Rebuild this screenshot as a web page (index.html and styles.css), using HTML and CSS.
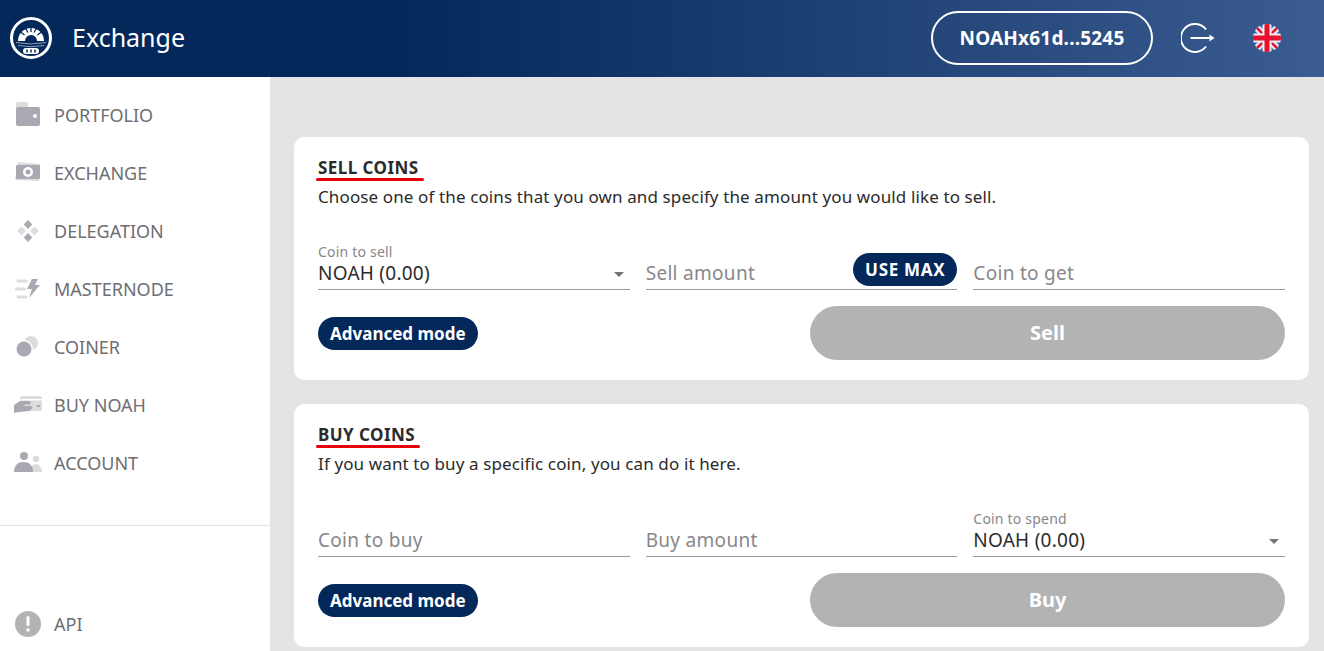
FILE: index.html
```html
<!DOCTYPE html>
<html lang="en">
<head>
    <meta charset="UTF-8">
    <title>Exchange</title>
    <link rel="stylesheet" href="styles.css">
</head>
<body>
    <header class="topbar">
        <svg class="logo" viewBox="0 0 44 44">
            <circle cx="22" cy="22" r="19.500" fill="none" stroke="#fff" stroke-width="3"/>
            <path d="M9 25a13 13 0 0 1 26 0z" fill="#fff"/>
            <path d="M22 10v6M16 11.500l3 5M28 11.500l-3 5M11.500 16l4 3M32.500 16l-4 3" stroke="#04285a" stroke-width="1.300"/>
            <path d="M16 25a6 6 0 0 1 12 0z" fill="#04285a"/>
            <path d="M7 26.500q15 3 30 0M9 29.500q13 2.500 26 0" fill="none" stroke="#8ea0b8" stroke-width="1"/>
            <rect x="14" y="32" width="16" height="6" rx="3" fill="#fff"/>
            <path d="M18 33.500v3M22 33.500v3M26 33.500v3" stroke="#04285a" stroke-width="1.500"/>
            <path d="M16 41h12" stroke="#fff" stroke-width="1.500" stroke-dasharray="2 1"/>
        </svg>
        <h1 class="page-title">Exchange</h1>
        <div class="topbar-right">
            <div class="wallet">NOAHx61d...5245</div>
            <svg class="logout" viewBox="0 0 34 30">
                <path d="M25 6.500 a14 14 0 1 0 0 17" fill="none" stroke="#fff" stroke-width="2"/>
                <path d="M9.500 15h20" stroke="#fff" stroke-width="2"/>
                <path d="M28.500 11.500l5 3.500-5 3.500z" fill="#fff"/>
            </svg>
            <svg class="flag" viewBox="0 0 28 28">
                <defs><clipPath id="flag-clip"><circle cx="14" cy="14" r="14"/></clipPath></defs>
                <g clip-path="url(#flag-clip)">
                    <rect width="28" height="28" fill="#2a5db0"/>
                    <path d="M0 0L28 28M28 0L0 28" stroke="#e6e6ee" stroke-width="7"/>
                    <path d="M0 0L28 28M28 0L0 28" stroke="#e8112d" stroke-width="2.500"/>
                    <path d="M14 0V28M0 14H28" stroke="#eeeef2" stroke-width="9"/>
                    <path d="M14 0V28M0 14H28" stroke="#e8112d" stroke-width="5"/>
                </g>
            </svg>
        </div>
    </header>

    <div class="layout">
        <aside class="sidebar">
            <nav class="menu">
                <a class="menu-item" href="#">
                    <svg class="menu-icon" viewBox="0 0 26 26">
                        <path d="M1 2a2 2 0 0 1 2-2h8a2 2 0 0 1 2 2v4H1z" fill="#dcdcdf"/>
                        <rect x="1" y="5" width="24" height="19" rx="2" fill="#a9a9b2"/>
                        <circle cx="20" cy="14" r="2" fill="#fff"/>
                    </svg>
                    PORTFOLIO
                </a>
                <a class="menu-item" href="#">
                    <svg class="menu-icon" viewBox="0 0 26 26">
                        <path d="M3 2L25 4l-1 17L0 20z" fill="#dcdcdf"/>
                        <rect x="1" y="5" width="24" height="14" rx="1" fill="#a9a9b2"/>
                        <circle cx="13" cy="12" r="5" fill="#fff"/>
                        <circle cx="13" cy="12" r="2.500" fill="#a9a9b2"/>
                    </svg>
                    EXCHANGE
                </a>
                <a class="menu-item" href="#">
                    <svg class="menu-icon" viewBox="0 0 26 26">
                        <path d="M13 2l4.300 4.500-4.300 4.500-4.300-4.500zM13 15l4.300 4.500-4.300 4.500-4.300-4.500z" fill="#a9a9b2"/>
                        <path d="M6.500 8.500l4.300 4.500-4.300 4.500L2.200 13zM19.500 8.500l4.300 4.500-4.300 4.500L15.200 13z" fill="#dcdcdf"/>
                    </svg>
                    DELEGATION
                </a>
                <a class="menu-item" href="#">
                    <svg class="menu-icon" viewBox="0 0 26 26">
                        <path d="M3 5h8M1.500 13h8M3 21h8" stroke="#dcdcdf" stroke-width="3" stroke-linecap="round"/>
                        <path d="M17 3h6l-3 6h5L14 22l3-9h-5z" fill="#a9a9b2"/>
                    </svg>
                    MASTERNODE
                </a>
                <a class="menu-item" href="#">
                    <svg class="menu-icon" viewBox="0 0 26 26">
                        <circle cx="16" cy="9" r="7" fill="#dcdcdf"/>
                        <circle cx="9" cy="15" r="9" fill="#fff"/>
                        <circle cx="9" cy="15" r="7.500" fill="#a9a9b2"/>
                    </svg>
                    COINER
                </a>
                <a class="menu-item" href="#">
                    <svg class="menu-icon menu-icon-wide" viewBox="0 0 28 26">
                        <path d="M6 6a2 2 0 0 1 2-2h18a2 2 0 0 1 2 2v11a2 2 0 0 1-2 2H10z" fill="#dcdcdf"/>
                        <path d="M7 7h21v1.500H7z" fill="#fff"/>
                        <path d="M0 13l6-4h9a1.800 1.800 0 0 1 0 3.600h-4l-1 1.400h7a1.500 1.500 0 0 1 1 2.600l-3 2.400-10 1-5 1z" fill="#a9a9b2"/>
                        <rect x="23" y="13" width="3" height="2" fill="#a9a9b2"/>
                    </svg>
                    BUY NOAH
                </a>
                <a class="menu-item" href="#">
                    <svg class="menu-icon menu-icon-wide" viewBox="0 0 28 26">
                        <circle cx="22" cy="9" r="3.200" fill="#dcdcdf"/>
                        <path d="M16 22c0-5 3-8 6-8s6 3 6 8z" fill="#dcdcdf"/>
                        <circle cx="10" cy="6" r="4" fill="#a9a9b2"/>
                        <path d="M0 22c0-7 4-10 9.500-10S19 15 19 22z" fill="#a9a9b2"/>
                    </svg>
                    ACCOUNT
                </a>
            </nav>
            <a class="menu-item api-link" href="#">
                <svg class="menu-icon" viewBox="0 0 26 26">
                    <circle cx="13" cy="13" r="13" fill="#b3b3b3"/>
                    <rect x="11.500" y="5" width="3" height="10" rx="1.500" fill="#fff"/>
                    <circle cx="13" cy="19" r="1.800" fill="#fff"/>
                </svg>
                API
            </a>
        </aside>

        <main class="content">
            <section class="card">
                <h2 class="card-title">SELL COINS</h2>
                <p class="card-text">Choose one of the coins that you own and specify the amount you would like to sell.</p>
                <div class="fields">
                    <div class="field">
                        <span class="field-label">Coin to sell</span>
                        <span class="field-value">NOAH (0.00)</span>
                        <span class="caret"></span>
                    </div>
                    <div class="field">
                        <span class="field-hint">Sell amount</span>
                        <button class="pill use-max">USE MAX</button>
                    </div>
                    <div class="field">
                        <span class="field-hint">Coin to get</span>
                    </div>
                </div>
                <div class="actions">
                    <button class="pill">Advanced mode</button>
                    <button class="submit">Sell</button>
                </div>
            </section>

            <section class="card">
                <h2 class="card-title">BUY COINS</h2>
                <p class="card-text">If you want to buy a specific coin, you can do it here.</p>
                <div class="fields">
                    <div class="field">
                        <span class="field-hint">Coin to buy</span>
                    </div>
                    <div class="field">
                        <span class="field-hint">Buy amount</span>
                    </div>
                    <div class="field">
                        <span class="field-label">Coin to spend</span>
                        <span class="field-value">NOAH (0.00)</span>
                        <span class="caret"></span>
                    </div>
                </div>
                <div class="actions">
                    <button class="pill">Advanced mode</button>
                    <button class="submit">Buy</button>
                </div>
            </section>
        </main>
    </div>
</body>
</html>
```

FILE: styles.css
```css
html, body {
    height: 100%;
}
body {
    margin: 0;
    overflow: hidden;
    font-family: "Noto Sans", "Open Sans", sans-serif;
    color: #2b2b2b;
    background-color: #e4e4e4;
}
.topbar {
    display: flex;
    align-items: center;
    height: 77px;
    padding: 0 43px 2px 9px;
    box-sizing: border-box;
    background: linear-gradient(90deg, #04285a 0%, #04285a 30%, #3b5c90 100%);
    color: white;
}
.logo {
    width: 44px;
    height: 44px;
}
.page-title {
    margin: 0 0 2px 19px;
    font-size: 25px;
    font-weight: 400;
}
.topbar-right {
    display: flex;
    align-items: center;
    margin-left: auto;
}
.wallet {
    width: 222px;
    height: 54px;
    display: flex;
    align-items: center;
    justify-content: center;
    box-sizing: border-box;
    border: 2px solid white;
    border-radius: 27px;
    font-size: 19px;
    font-weight: 700;
    letter-spacing: .2px;
}
.logout {
    width: 34px;
    height: 30px;
    margin-left: 28px;
}
.flag {
    width: 28px;
    height: 28px;
    margin-left: 38px;
}
.layout {
    display: flex;
    height: calc(100% - 77px);
}
.sidebar {
    width: 270px;
    flex-shrink: 0;
    background-color: white;
    display: flex;
    flex-direction: column;
}
.menu {
    display: flex;
    flex-direction: column;
    padding: 9px 0 33px;
    border-bottom: 1px solid #e4e4e4;
}
.menu-item {
    display: flex;
    align-items: center;
    height: 58px;
    padding-left: 15px;
    color: #6e6e72;
    font-size: 18px;
    text-decoration: none;
}
.menu-icon {
    width: 26px;
    height: 26px;
    margin-right: 13px;
    flex-shrink: 0;
}
.menu-icon-wide {
    width: 28px;
    margin-left: -1px;
    margin-right: 12px;
}
.api-link {
    margin-top: auto;
    margin-bottom: -2px;
}
.content {
    flex: 1;
    padding: 60px 15px 0 24px;
}
.card {
    background-color: white;
    border-radius: 10px;
    padding: 20px 24px 20px;
    height: 243px;
    box-sizing: border-box;
    margin-bottom: 24px;
}
.card-title {
    display: inline-block;
    margin: 0;
    position: relative;
    font-size: 17px;
    line-height: 22px;
    font-weight: 700;
    letter-spacing: .45px;
}
.card-title::after {
    content: "";
    position: absolute;
    left: -2px;
    right: -5px;
    bottom: -2px;
    height: 3px;
    border-radius: 2px;
    background-color: #e8000d;
}
.card-text {
    margin: 7px 0 0;
    font-size: 17px;
    line-height: 22px;
    letter-spacing: .12px;
}
.fields {
    display: grid;
    grid-template-columns: repeat(3, 1fr);
    gap: 16px;
    margin-top: 30px;
}
.field {
    position: relative;
    height: 52px;
    box-sizing: border-box;
    display: flex;
    flex-direction: column;
    justify-content: flex-end;
    border-bottom: 1px solid #9a9a9a;
    padding-bottom: 3px;
}
.field-label {
    margin-bottom: 1px;
    font-size: 14px;
    line-height: 16px;
    letter-spacing: .2px;
    color: #87878a;
}
.field-value {
    font-size: 19px;
    line-height: 25px;
    letter-spacing: .25px;
}
.field-hint {
    font-size: 19px;
    line-height: 25px;
    letter-spacing: .3px;
    color: #87878a;
}
.caret {
    position: absolute;
    right: 6px;
    bottom: 12px;
    border-left: 5px solid transparent;
    border-right: 5px solid transparent;
    border-top: 5px solid #757575;
}
.pill {
    height: 33px;
    padding: 0 12px;
    border: none;
    border-radius: 17px;
    background-color: #04285a;
    color: white;
    font-family: inherit;
    font-size: 17px;
    font-weight: 700;
}
.use-max {
    position: absolute;
    right: 0;
    bottom: 3px;
    letter-spacing: .7px;
}
.actions {
    display: flex;
    align-items: center;
    justify-content: space-between;
    margin-top: 16px;
}
.submit {
    width: 475px;
    height: 54px;
    padding-bottom: 3px;
    border: none;
    border-radius: 27px;
    background-color: #b3b3b3;
    color: white;
    font-family: inherit;
    font-size: 20px;
    font-weight: 700;
}
```
